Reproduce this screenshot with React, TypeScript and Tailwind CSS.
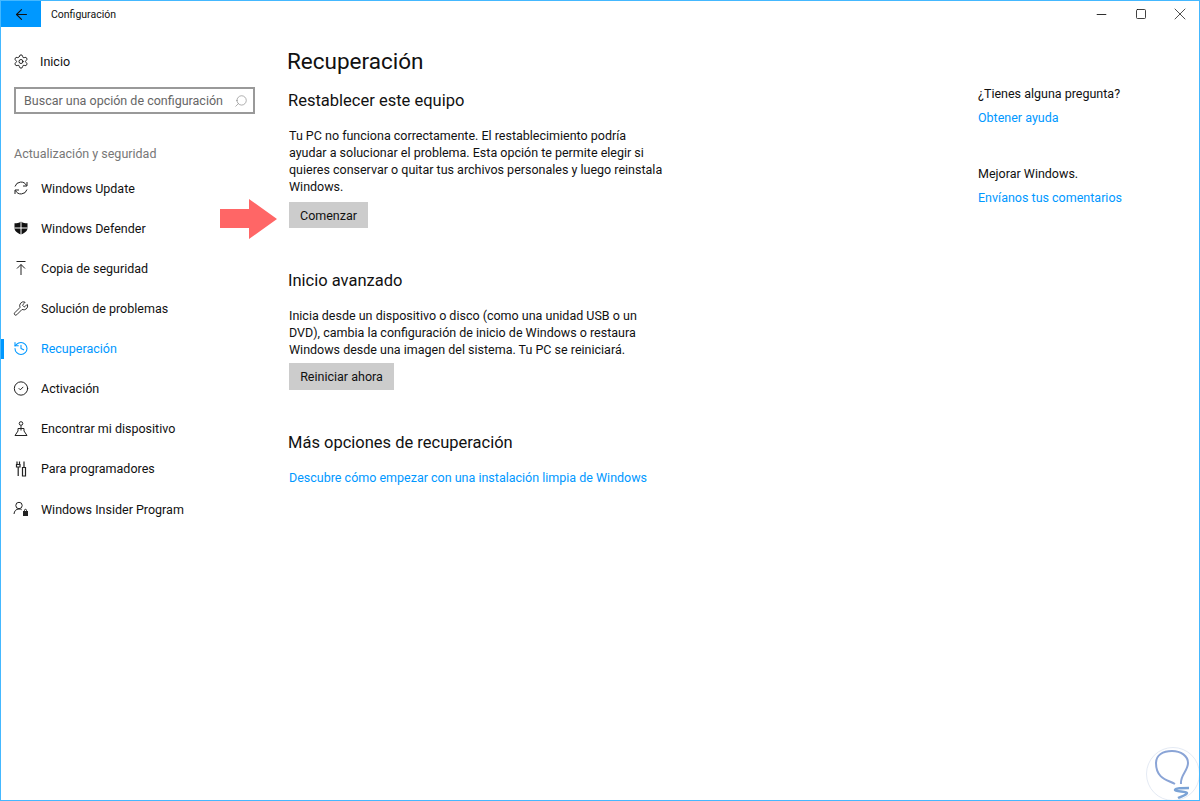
import React from "react";
import { ArrowLeft, Search, Settings, Wrench, History, CircleCheck, Minus, Square, X } from "lucide-react";

function RefreshIcon() {
  return (
    <svg width="16" height="16" viewBox="0 0 16 16" fill="none" stroke="#222" strokeWidth="1">
      <path d="M2 6.500A6.200 6.200 0 0 1 13.500 5.500" />
      <path d="M14 2v4h-4" />
      <path d="M14 9.500A6.200 6.200 0 0 1 2.500 10.500" />
      <path d="M2 14v-4h4" />
    </svg>
  );
}

function ShieldIcon() {
  return (
    <svg width="16" height="16" viewBox="0 0 16 16" fill="#111">
      <path d="M8 1.500C6 3 4 3.300 1.500 3.300v4.500c0 3.200 2.600 5.300 6.500 6.700 3.900-1.400 6.500-3.500 6.500-6.700V3.300C12 3.300 10 3 8 1.500z" />
      <path d="M8 1v14M1.500 8h13" stroke="#fff" strokeWidth="1" />
    </svg>
  );
}

function BackupIcon() {
  return (
    <svg width="16" height="16" viewBox="0 0 16 16" fill="none" stroke="#222" strokeWidth="1">
      <path d="M3.500 1.500h9M8 15V4.500M4 8.500l4-4 4 4" />
    </svg>
  );
}

function FindIcon() {
  return (
    <svg width="16" height="16" viewBox="0 0 16 16" fill="none" stroke="#222" strokeWidth="1">
      <circle cx="8" cy="2.500" r="1.800" />
      <path d="M8 4.500v5M5 7.500h6v2.500l3 4.500H2L5 10z" />
    </svg>
  );
}

function DevIcon() {
  return (
    <svg width="16" height="16" viewBox="0 0 16 16" fill="none" stroke="#222" strokeWidth="1.200">
      <path d="M4 .5v3M6.500 .5v3M3.500 3.500h3.500v2.500h-3.500zM5.200 6v9" />
      <path d="M11 .5v5.500M9.500 6.500h3v8.500h-3z" />
    </svg>
  );
}

function InsiderIcon() {
  return (
    <svg width="16" height="16" viewBox="0 0 16 16" fill="none" stroke="#222" strokeWidth="1">
      <circle cx="6" cy="4.500" r="3.200" />
      <path d="M1 13c.3-3 2-5 5-5 1 0 2 .2 2.600.7" />
      <rect x="10.500" y="10.500" width="4" height="4" fill="#222" />
      <path d="M11.500 10.500V9.300a1 1 0 0 1 2 0v1.200" />
    </svg>
  );
}

const navItems = [
  { label: "Windows Update", icon: <RefreshIcon /> },
  { label: "Windows Defender", icon: <ShieldIcon /> },
  { label: "Copia de seguridad", icon: <BackupIcon /> },
  { label: "Solución de problemas", icon: <Wrench size={17} strokeWidth={1.3} /> },
  { label: "Recuperación", icon: <History size={17} strokeWidth={1.6} />, active: true },
  { label: "Activación", icon: <CircleCheck size={17} strokeWidth={1.4} /> },
  { label: "Encontrar mi dispositivo", icon: <FindIcon /> },
  { label: "Para programadores", icon: <DevIcon /> },
  { label: "Windows Insider Program", icon: <InsiderIcon /> },
];

function Sidebar() {
  return (
    <aside className="w-[287px] shrink-0 flex flex-col">
      <div className="flex items-center h-[40px] mt-[14px] pl-[12px] gap-[11px] text-[#111]">
        <div className="w-[16px] flex justify-center"><Settings size={17} strokeWidth={1.4} /></div>
        <span>Inicio</span>
      </div>
      <div className="ml-[13px] mt-[6px] w-[241px] h-[27px] border-2 border-[#999] flex items-center justify-between pl-[8px] pr-[5px] text-[#666]">
        <span>Buscar una opción de configuración</span>
        <Search size={14} strokeWidth={1} className="-scale-x-100 text-[#777]" />
      </div>
      <div className="mt-[29px] pl-[13px] h-[20px] flex items-center text-[#777]">Actualización y seguridad</div>
      <nav className="mt-[5px] flex flex-col">
        {navItems.map((item) => (
          <div key={item.label} className={`relative flex items-center h-[40.125px] pl-[12px] gap-[11px] ${item.active ? "text-[#0098ff]" : "text-[#111]"}`}>
            {item.active && <div className="absolute left-0 top-[10px] w-[3px] h-[20px] bg-[#0098ff]" />}
            <div className="w-[16px] flex justify-center">{item.icon}</div>
            <span className="ml-px">{item.label}</span>
          </div>
        ))}
      </nav>
    </aside>
  );
}

export default function App() {
  return (
    <div className="relative w-[1200px] h-[801px] bg-white border border-[#44b8ff] overflow-hidden text-[12.5px] leading-[17px]" style={{ fontFamily: "Roboto, sans-serif" }}>
      <header className="h-[26px] flex items-center text-[#111]">
        <div className="w-[40px] h-full bg-[#0098ff] flex items-center justify-center">
          <ArrowLeft size={17} strokeWidth={1.6} />
        </div>
        <span className="ml-[10px] text-[10.5px]">Configuración</span>
        <div className="ml-auto flex items-center">
          <div className="w-[39px] flex justify-center"><Minus size={15} strokeWidth={1.4} /></div>
          <div className="w-[39px] flex justify-center"><Square size={12} strokeWidth={1.6} /></div>
          <div className="w-[39px] flex justify-center"><X size={20} strokeWidth={0.9} /></div>
        </div>
      </header>
      <div className="flex">
        <Sidebar />
        <main className="w-[690px] shrink-0 text-[#111]">
          <h1 className="mt-[19px] -ml-px text-[22.5px] leading-[30px]">Recuperación</h1>
          <h2 className="mt-[14px] text-[16.5px] leading-[22px]">Restablecer este equipo</h2>
          <p className="mt-[15px] ml-px w-[376px]">Tu PC no funciona correctamente. El restablecimiento podría ayudar a solucionar el problema. Esta opción te permite elegir si quieres conservar o quitar tus archivos personales y luego reinstala Windows.</p>
          <button className="block mt-[7px] ml-px w-[79px] h-[26px] bg-[#cccccc]">Comenzar</button>
          <h2 className="mt-[42px] text-[16.5px] leading-[22px]">Inicio avanzado</h2>
          <p className="mt-[15px] ml-px w-[376px]">Inicia desde un dispositivo o disco (como una unidad USB o un DVD), cambia la configuración de inicio de Windows o restaura Windows desde una imagen del sistema. Tu PC se reiniciará.</p>
          <button className="block mt-[5px] ml-px w-[105px] h-[27px] bg-[#cccccc]">Reiniciar ahora</button>
          <h2 className="mt-[42px] text-[16.5px] leading-[22px]">Más opciones de recuperación</h2>
          <a className="block mt-[15px] ml-px text-[#0098ff]">Descubre cómo empezar con una instalación limpia de Windows</a>
        </main>
        <section className="text-[#111] pt-[58px]">
          <p>¿Tienes alguna pregunta?</p>
          <a className="block mt-[7px] text-[#0098ff]">Obtener ayuda</a>
          <p className="mt-[39px]">Mejorar Windows.</p>
          <a className="block mt-[7px] text-[#0098ff]">Envíanos tus comentarios</a>
        </section>
      </div>
      <svg className="absolute left-[219px] top-[198px]" width="57" height="40" viewBox="0 0 57 40">
        <path d="M0 10h29V0l28 20-28 20V29H0z" fill="#ff6666" />
      </svg>
      <svg className="absolute left-[1145px] top-[746px]" width="54" height="54" viewBox="0 0 54 54" fill="none">
        <circle cx="27" cy="27" r="26.500" stroke="#e4eaf4" />
        <path d="M29 37C22 33 10 32 10 16 10 8 17 4 26 4c9 0 16 5 16 12 0 8-8 12-7 21" stroke="#8aa4d6" strokeWidth="2" />
        <path d="M43 41c-7 0-14 0-14 2s12 1 12 3-5 3-9 5" stroke="#7ba3d6" strokeWidth="2.500" />
      </svg>
    </div>
  );
}
